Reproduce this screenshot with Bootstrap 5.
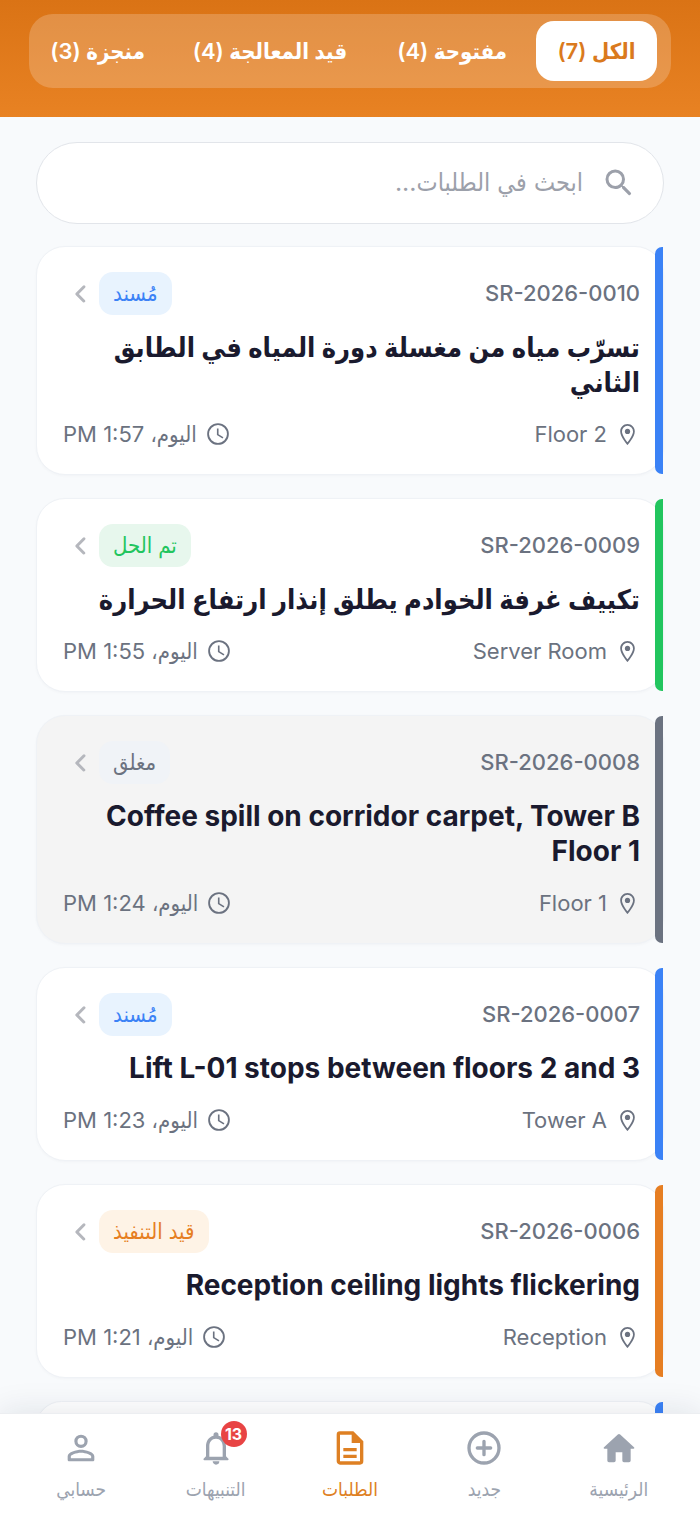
<!DOCTYPE html>
<html lang="ar" dir="rtl">
<head>
<meta charset="utf-8">
<meta name="viewport" content="width=device-width, initial-scale=1">
<title>الطلبات</title>
<link href="https://cdn.jsdelivr.net/npm/bootstrap@5.3.0/dist/css/bootstrap.min.css" rel="stylesheet">
<style>
  body { font-family: Inter, "DejaVu Sans Condensed", "DejaVu Sans", sans-serif; background: #f8fafc; color: #1a1a2e; }
  .app-shell { height: 100vh; overflow: hidden; }
  .app-header { background: linear-gradient(#da7315, #e88223); padding: 14px 29px 29px; }
  .filter-tabs { display: grid; grid-template-columns: 121fr 153fr 197fr 133fr; gap: 7px; padding: 7px 14px 7px 2px; border-radius: 24px; background: rgba(255,255,255,.2); }
  .filter-tab { height: 60px; border: 0; border-radius: 18px; background: transparent; color: #fff; font-size: 22px; font-weight: 600; padding: 0; white-space: nowrap; }
  .filter-tab.active { background: #fff; color: #da7a1d; }
  .app-main { padding: 25px 36px 0; overflow-y: auto; scrollbar-width: none; }
  .app-main::-webkit-scrollbar { display: none; }
  .search-box { height: 82px; border: 1px solid #e2e5ea; border-radius: 41px; padding: 0 26px; gap: 18px; background: #fff; color: #9ca0aa; }
  .search-box input { border: 0; outline: 0; background: transparent; font-size: 25px; color: #1a1a2e; min-width: 0; }
  .search-box input::placeholder { color: #9ca0aa; opacity: 1; }
  .request-list { gap: 23px; margin-top: 22px; }
  .request { --accent: #3b82f6; --tint: #e8f3fe; position: relative; border: 1px solid #eff2f6; border-radius: 29px; background: #fff; padding: 25px 23px 24px 26px; color: #1a1a2e; text-decoration: none; box-shadow: 0 1px 3px rgba(20,30,60,.03); }
  .request::after { content: ""; position: absolute; top: 0; bottom: 0; right: 0; width: 8px; background: var(--accent); border-radius: 7px 0 0 7px; }
  .request.resolved { --accent: #22c55e; --tint: #e7f7ed; }
  .request.progressing { --accent: #e67e22; --tint: #fef3e6; }
  .request.closed { --accent: #6b7280; --tint: #f0f3f7; background: #f4f4f4; }
  .request-id { font-size: 22px; font-weight: 500; color: #6b7280; }
  .status { height: 43px; padding: 0 14px; border-radius: 14px; background: var(--tint); color: var(--accent); font-size: 22px; font-weight: 500; }
  .request h2 { font-size: 28px; line-height: 35px; font-weight: 700; margin: 15px 0 18px; }
  .request h2.arabic { font-size: 27px; }
  .meta { height: 32px; font-size: 22px; color: #6b7280; }
  .meta span { gap: 8px; }
  .chevron { color: #b5b7bd; }
  .app-nav { position: relative; z-index: 2; background: #fff; height: 102px; padding: 0 14px; box-shadow: 0 -2px 30px rgba(20,30,60,.1); border-top: 1px solid #eceef1; }
  .app-nav a { color: #9ca3af; text-decoration: none; font-size: 19px; line-height: 26px; padding-top: 14px; gap: 9px; font-weight: 500; }
  .app-nav a.active { color: #de8023; }
  .count { position: absolute; top: -7px; left: 25px; width: 26px; height: 26px; border-radius: 50%; background: #e84444; color: #fff; font-size: 16px; line-height: 26px; font-weight: 700; text-align: center; }
  svg { display: block; flex: none; fill: currentColor; }
</style>
</head>
<body>
<svg width="0" height="0" class="position-absolute" aria-hidden="true">
  <symbol id="chev" viewBox="0 0 24 24"><path d="M14.7 6.500a1 1 0 0 0-1.400 0l-4.800 4.800a1 1 0 0 0 0 1.400l4.800 4.800a1 1 0 0 0 1.400-1.400L10.600 12l4.100-4.100a1 1 0 0 0 0-1.400z"/></symbol>
  <symbol id="pin" viewBox="0 0 24 24"><path d="M12 2C8.130 2 5 5.130 5 9c0 5.250 7 13 7 13s7-7.750 7-13c0-3.870-3.130-7-7-7zM6.700 9a5.300 5.300 0 0 1 10.600 0c0 2.880-3.180 7.800-5.300 10.500C9.920 16.800 6.700 11.850 6.700 9z"/><circle cx="12" cy="9" r="2.500"/></symbol>
  <symbol id="clock" viewBox="0 0 24 24"><path d="M12 2a10 10 0 1 0 0 20 10 10 0 0 0 0-20zm0 18.300a8.300 8.300 0 1 1 0-16.600 8.300 8.300 0 0 1 0 16.600zM12.500 7H11v6l5.200 3.200.8-1.300-4.500-2.700z"/></symbol>
</svg>
<div class="app-shell d-flex flex-column">
  <header class="app-header">
    <nav class="filter-tabs" aria-label="تصفية">
      <button class="filter-tab active">الكل (7)</button>
      <button class="filter-tab">مفتوحة (4)</button>
      <button class="filter-tab">قيد المعالجة (4)</button>
      <button class="filter-tab">منجزة (3)</button>
    </nav>
  </header>

  <main class="app-main flex-grow-1">
    <label class="search-box d-flex align-items-center">
      <svg width="36" height="36" viewBox="0 0 24 24"><path d="M15.500 14h-.79l-.28-.27A6.470 6.470 0 0 0 16 9.500 6.500 6.500 0 1 0 9.500 16c1.610 0 3.090-.59 4.230-1.570l.27.28v.79l4.250 4.250a1.050 1.050 0 0 0 1.490-1.490L15.500 14zm-6 0a4.500 4.500 0 1 1 0-9 4.500 4.500 0 0 1 0 9z"/></svg>
      <input type="search" class="flex-grow-1 p-0" placeholder="ابحث في الطلبات..." aria-label="ابحث في الطلبات">
    </label>

    <div class="request-list d-flex flex-column">
      <a href="#" class="request assigned">
        <div class="d-flex align-items-center justify-content-between">
          <span class="request-id">SR-2026-0010</span>
          <span class="d-flex align-items-center"><span class="status d-flex align-items-center">مُسند</span><svg class="chevron" width="36" height="36"><use href="#chev"/></svg></span>
        </div>
        <h2 class="arabic">تسرّب مياه من مغسلة دورة المياه في الطابق الثاني</h2>
        <div class="meta d-flex align-items-center justify-content-between">
          <span class="d-flex align-items-center"><svg width="25" height="25"><use href="#pin"/></svg>Floor 2</span>
          <span class="d-flex align-items-center"><svg width="26" height="26"><use href="#clock"/></svg>اليوم، 1:57 PM</span>
        </div>
      </a>
      <a href="#" class="request resolved">
        <div class="d-flex align-items-center justify-content-between">
          <span class="request-id">SR-2026-0009</span>
          <span class="d-flex align-items-center"><span class="status d-flex align-items-center">تم الحل</span><svg class="chevron" width="36" height="36"><use href="#chev"/></svg></span>
        </div>
        <h2 class="arabic">تكييف غرفة الخوادم يطلق إنذار ارتفاع الحرارة</h2>
        <div class="meta d-flex align-items-center justify-content-between">
          <span class="d-flex align-items-center"><svg width="25" height="25"><use href="#pin"/></svg>Server Room</span>
          <span class="d-flex align-items-center"><svg width="26" height="26"><use href="#clock"/></svg>اليوم، 1:55 PM</span>
        </div>
      </a>
      <a href="#" class="request closed">
        <div class="d-flex align-items-center justify-content-between">
          <span class="request-id">SR-2026-0008</span>
          <span class="d-flex align-items-center"><span class="status d-flex align-items-center">مغلق</span><svg class="chevron" width="36" height="36"><use href="#chev"/></svg></span>
        </div>
        <h2>Coffee spill on corridor carpet, Tower B Floor 1</h2>
        <div class="meta d-flex align-items-center justify-content-between">
          <span class="d-flex align-items-center"><svg width="25" height="25"><use href="#pin"/></svg>Floor 1</span>
          <span class="d-flex align-items-center"><svg width="26" height="26"><use href="#clock"/></svg>اليوم، 1:24 PM</span>
        </div>
      </a>
      <a href="#" class="request assigned">
        <div class="d-flex align-items-center justify-content-between">
          <span class="request-id">SR-2026-0007</span>
          <span class="d-flex align-items-center"><span class="status d-flex align-items-center">مُسند</span><svg class="chevron" width="36" height="36"><use href="#chev"/></svg></span>
        </div>
        <h2>Lift L-01 stops between floors 2 and 3</h2>
        <div class="meta d-flex align-items-center justify-content-between">
          <span class="d-flex align-items-center"><svg width="25" height="25"><use href="#pin"/></svg>Tower A</span>
          <span class="d-flex align-items-center"><svg width="26" height="26"><use href="#clock"/></svg>اليوم، 1:23 PM</span>
        </div>
      </a>
      <a href="#" class="request progressing">
        <div class="d-flex align-items-center justify-content-between">
          <span class="request-id">SR-2026-0006</span>
          <span class="d-flex align-items-center"><span class="status d-flex align-items-center">قيد التنفيذ</span><svg class="chevron" width="36" height="36"><use href="#chev"/></svg></span>
        </div>
        <h2>Reception ceiling lights flickering</h2>
        <div class="meta d-flex align-items-center justify-content-between">
          <span class="d-flex align-items-center"><svg width="25" height="25"><use href="#pin"/></svg>Reception</span>
          <span class="d-flex align-items-center"><svg width="26" height="26"><use href="#clock"/></svg>اليوم، 1:21 PM</span>
        </div>
      </a>
      <a href="#" class="request assigned" aria-label="طلب"></a>
    </div>
  </main>

  <nav class="app-nav d-flex flex-shrink-0">
    <a href="#" class="col d-flex flex-column align-items-center">
      <svg width="40" height="40" viewBox="0 0 24 24"><path d="M10 19.500v-5h4v5c0 .5.400 1 1 1h3c.6 0 1-.5 1-1v-7h1.700c.5 0 .7-.6.300-.9L12.700 3.900a1 1 0 0 0-1.400 0L3 11.600c-.4.3-.2.900.3.900H5v7c0 .5.400 1 1 1h3c.6 0 1-.5 1-1z"/></svg>
      <span>الرئيسية</span>
    </a>
    <a href="#" class="col d-flex flex-column align-items-center">
      <svg width="40" height="40" viewBox="0 0 24 24"><path d="M12 7a1 1 0 0 0-1 1v3H8a1 1 0 0 0 0 2h3v3a1 1 0 0 0 2 0v-3h3a1 1 0 0 0 0-2h-3V8a1 1 0 0 0-1-1zm0-5a10 10 0 1 0 0 20 10 10 0 0 0 0-20zm0 18a8 8 0 1 1 0-16 8 8 0 0 1 0 16z"/></svg>
      <span>جديد</span>
    </a>
    <a href="#" class="col d-flex flex-column align-items-center active" aria-current="page">
      <svg width="40" height="40" viewBox="0 0 24 24"><path d="M14 2H6a2 2 0 0 0-2 2v16c0 1.100.9 2 2 2h12a2 2 0 0 0 2-2V8l-6-6zM6 20V4h7v5h5v11H6zm2-8h8v2H8zm0 4h8v2H8z"/></svg>
      <span>الطلبات</span>
    </a>
    <a href="#" class="col d-flex flex-column align-items-center">
      <span class="position-relative">
        <svg width="40" height="40" viewBox="0 0 24 24"><path d="M12 22a2 2 0 0 0 2-2h-4c0 1.100.9 2 2 2zm7-4-1-1v-6c0-3.070-1.630-5.640-4.500-6.320V4a1.500 1.500 0 0 0-3 0v.68C7.640 5.360 6 7.920 6 11v6l-1 1c-.9.5-.5 1.300 0 1.300h14c.6 0 .9-.8 0-1.300zm-3-.7H8V11c0-2.480 1.510-4.500 4-4.500s4 2.020 4 4.500v6.300z"/></svg>
        <span class="count">13</span>
      </span>
      <span>التنبيهات</span>
    </a>
    <a href="#" class="col d-flex flex-column align-items-center">
      <svg width="40" height="40" viewBox="0 0 24 24"><path d="M12 5.900a2.100 2.100 0 1 1 0 4.200 2.100 2.100 0 0 1 0-4.200zm0 9c2.970 0 6.100 1.460 6.100 2.100v1.100H5.900V17c0-.64 3.130-2.100 6.100-2.100zM12 4a4 4 0 1 0 0 8 4 4 0 0 0 0-8zm0 9c-2.670 0-8 1.340-8 4v2c0 .55.45 1 1 1h14c.55 0 1-.45 1-1v-2c0-2.660-5.330-4-8-4z"/></svg>
      <span>حسابي</span>
    </a>
  </nav>
</div>
<script src="https://cdn.jsdelivr.net/npm/bootstrap@5.3.0/dist/js/bootstrap.bundle.min.js"></script>
</body>
</html>
